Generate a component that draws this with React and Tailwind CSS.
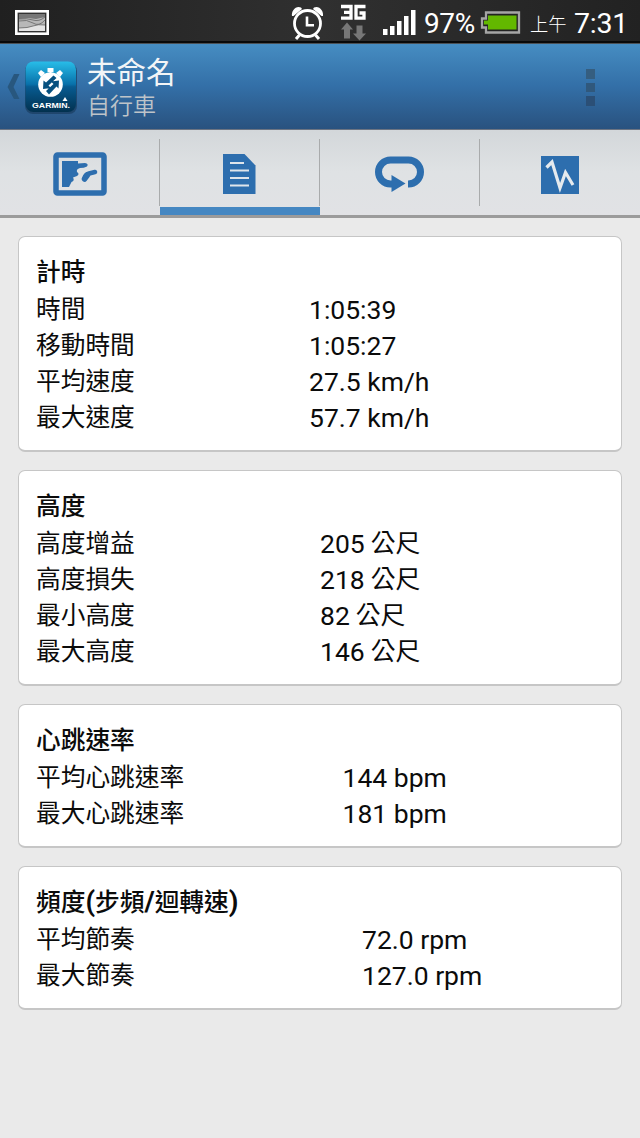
const cards = [
  { title: ["計時"], col: "w-[273px]", rows: [["時間", "1:05:39", ""], ["移動時間", "1:05:27", ""], ["平均速度", "27.5 km/h", ""], ["最大速度", "57.7 km/h", ""]] },
  { title: ["高度"], col: "w-[284px]", rows: [["高度增益", "205", "公尺"], ["高度損失", "218", "公尺"], ["最小高度", "82", "公尺"], ["最大高度", "146", "公尺"]] },
  { title: ["心跳速率"], col: "w-[306.5px]", rows: [["平均心跳速率", "144 bpm", ""], ["最大心跳速率", "181 bpm", ""]] },
  { title: ["頻度", "(", "步頻", "/", "迴轉速", ")"], col: "w-[326px]", rows: [["平均節奏", "72.0 rpm", ""], ["最大節奏", "127.0 rpm", ""]] },
];

function StatusBar() {
  return (
    <header className="flex h-11 shrink-0 items-center border-b border-[#4a5055] bg-gradient-to-r from-[#202020] via-[#303030] to-[#222222] text-white shadow-[inset_0_-2px_0_#090909]">
      <svg className="mt-[2px] ml-[15px] shrink-0" width="34" height="25" viewBox="0 0 34 25">
        <rect x="1.3" y="1.3" width="31.4" height="22.4" fill="#333" stroke="#fff" strokeWidth="2.6" />
        <rect x="4" y="4" width="26" height="17" fill="#b8b8b8" />
        <path d="M4 4h26v3l-9 2-8-1-9 1z" fill="#777" />
        <path d="M4 18q9 0 14-2t12-1v6H4z" fill="#e4e4e4" />
        <path d="M4 9q8-1 14 1t12-3M4 11q8-2 14 2t12-3M4 18q9 0 14-2t12-1" fill="none" stroke="#666" strokeWidth=".8" />
      </svg>
      <svg className="ml-[242px] shrink-0" width="34" height="36" viewBox="0 0 34 36" fill="none" stroke="#fff">
        <circle cx="16.5" cy="19.5" r="13" strokeWidth="2.8" />
        <path d="M16 12.5v8.7h7" strokeWidth="2.6" />
        <path d="M8.5 31l-3.5 4M24.5 31l3.5 4" strokeWidth="3" />
        <path d="M1 12C0 7 5 1 10 3.500l1 1.500-8.500 7zM32 12C33 7 28 1 23 3.500l-1 1.500 8.500 7z" fill="#fff" stroke="none" />
      </svg>
      <svg className="ml-[15px] shrink-0" width="28" height="38" viewBox="0 0 28 38">
        <path d="M1 3.500h10v11.700H1M4 9.300h7M25.500 3.500h-9.500v11.700h8V10h-4.500" fill="none" stroke="#fff" strokeWidth="3.3" />
        <path d="M7 19.500l6 7h-3v9H4v-9H1zM19.500 37.500l-6.500-7h3.500v-8h6v8h3.500z" fill="#777" />
      </svg>
      <svg className="ml-[14px] shrink-0" width="34" height="28" viewBox="0 0 34 28" fill="#fff">
        <path d="M1 21h4.500v6H1zM8 18h4.500v9H8zM15 13h4.500v14H15zM22 8h4.500v19H22zM29 2h4.500v25H29z" />
      </svg>
      <span className="ml-[8px] w-[53px] whitespace-nowrap pt-[3px] text-[28px] leading-[41px] tracking-[-0.4px]">97%</span>
      <svg className="mt-[2px] ml-[3px] shrink-0" width="41" height="24" viewBox="0 0 41 24">
        <path d="M6 1.500h33v20H6v-5H2v-9h4z" fill="#222" stroke="#a5a5a5" strokeWidth="2.300" />
        <path d="M8 4.500h28.500v14H8v-5H4v-4h4z" fill="#63b800" />
      </svg>
      <span className="ml-[9px] w-[36px] whitespace-nowrap pt-[6px] text-[18.3px] font-light">上午</span>
      <span className="ml-[8px] whitespace-nowrap pt-[3px] text-[28.5px] leading-[41px] tracking-[-0.2px]">7:31</span>
    </header>
  );
}

function AppLogo() {
  return (
    <svg className="ml-[4px] shrink-0" width="52" height="54" viewBox="0 0 52 54">
      <defs>
        <linearGradient id="logo" x2="0" y2="1">
          <stop stopColor="#28bde8" /><stop offset=".45" stopColor="#0871aa" />
          <stop offset=".5" stopColor="#075b91" /><stop offset="1" stopColor="#02314f" />
        </linearGradient>
      </defs>
      <rect y="2" width="52" height="51" rx="8" fill="#193d60" opacity=".7" />
      <rect x=".5" y=".5" width="50.5" height="50.5" rx="8" fill="url(#logo)" />
      <circle cx="25.500" cy="23.500" r="12.300" fill="#fff" />
      <path d="M22.500 7h6v4h-2v2h-2v-2h-2zM13 12l3-3 4 3-4 4zM31 12l4-3 3 3-3 4z" fill="#fff" />
      <path d="M28.500 14.500L21 21.500l-2.500-2L18 28l8-1-2.500-2.500 8-7.500zM34 19.500l-8 1 2.500 2.500-7.500 7 3 3.500 7.500-8 2 2z" fill="#06507f" />
      <path d="M40 36l2.500 4h-5z" fill="#fff" />
      <text x="7" y="46.500" textLength="38" lengthAdjust="spacingAndGlyphs" fill="#fff" fontFamily="Liberation Sans, sans-serif" fontSize="7.500" fontWeight="bold">GARMIN.</text>
    </svg>
  );
}

function ActionBar() {
  return (
    <div className="flex h-[86px] shrink-0 items-start border-b border-[#6c7482] bg-gradient-to-b from-[#468dc2] via-[#336fa7] to-[#29527f]">
      <svg className="mt-[30px] ml-[7px] shrink-0" width="14" height="27" viewBox="0 0 14 27">
        <path d="M7 0h5.500L6.500 13l6 12H7L.5 13z" fill="#28577e" />
      </svg>
      <div className="mt-[17px]"><AppLogo /></div>
      <div className="ml-[10px] mt-[12px] flex flex-col">
        <h1 className="h-[34px] whitespace-nowrap text-[29.500px] leading-[34px] font-normal text-[#f2f5f7]">未命名</h1>
        <p className="h-[30px] whitespace-nowrap text-[23px] leading-[33px] font-[350] text-[#bec4c9]">自行車</p>
      </div>
      <div className="ml-auto mr-[45px] mt-[25px] flex flex-col gap-[4px]">
        <span className="size-[9.5px] bg-[#355e80]" /><span className="size-[9.5px] bg-[#30587c]" /><span className="size-[9.5px] bg-[#2b4f76]" />
      </div>
    </div>
  );
}

function MapIcon() {
  return (
    <svg width="54" height="44" viewBox="0 0 54 44">
      <rect x="3" y="3" width="48" height="38" rx="1.500" fill="none" stroke="#2d6eae" strokeWidth="5.500" />
      <path d="M9 9h16v2.500l7-.5q4 .5 2 3.500-3 1.500-7 1.500-4 1-3 4 3 2 0 4l-4 1.500q2 3-1.500 4.500L16 35H9z" fill="#2d6eae" />
      <path d="M31.500 26.500q.5-4 4.500-5l6-1.500" fill="none" stroke="#2d6eae" strokeWidth="4.600" strokeLinecap="round" />
      <path d="M31.500 27l3-4" stroke="#2d6eae" strokeWidth="5.500" strokeLinecap="round" />
    </svg>
  );
}

function Tabs() {
  const icons = [
    <MapIcon key="map" />,
    <svg key="doc" width="33" height="40" viewBox="0 0 33 40">
      <path d="M0 0h21.500L32.500 11.500V40H0z" fill="#2d6eae" />
      <path d="M7 9h14M7 16.500h19M7 24h19M7 31.500h19" stroke="#dfe5eb" strokeWidth="2.200" />
    </svg>,
    <svg key="loop" width="49" height="36" viewBox="0 0 49 36">
      <path d="M17 28h-1.500a12 12 0 0 1 0-24H33.500a12 12 0 0 1 0 24H33" fill="none" stroke="#2d6eae" strokeWidth="7" />
      <path d="M16.500 19l14 8.500-14 8.500z" fill="#2d6eae" />
    </svg>,
    <svg key="chart" width="38" height="38" viewBox="0 0 38 38">
      <path d="M0 0h38v38H0z" fill="#2d6eae" />
      <path d="M5.500 11.500L11 6l8 26 5.500-15.500 7.500 12.500" fill="none" stroke="#e5eaee" strokeWidth="3.200" />
    </svg>,
  ];
  const pads = ["pt-[22px]", "pt-[24px]", "pt-[26px]", "pt-[26px]"];
  return (
    <nav className="grid h-[88px] shrink-0 grid-cols-4 border-b-[3px] border-[#9b9b9b] bg-gradient-to-b from-[#d3d7da] via-[#dfe2e4] to-[#e1e2e5]">
      {icons.map((icon, i) => (
        <div key={i} className="flex flex-col">
          <div className="flex h-[77px] pt-[9px]">
            <div className={"-mt-[9px] flex flex-1 items-start justify-center " + pads[i]}>{icon}</div>
            {i < 3 && <div className="h-[67px] w-px bg-[#a9abac]" />}
          </div>
          {i === 1 && <div className="h-2 bg-[#4587c2]" />}
        </div>
      ))}
    </nav>
  );
}

function Card({ title, col, rows }) {
  return (
    <section className="rounded-[7px] border border-b-2 border-[#c6c6c6] bg-white pt-[18px] pb-[15px] pl-[17px] text-[26.500px] leading-9 text-[#0b0b0b]">
      <h2 className="h-9 whitespace-nowrap text-[24.7px] font-[550] leading-9">
        {title.map((part, i) => (
          <span key={i} className={i % 2 ? "text-[27.5px] leading-none font-bold" : ""}>{part}</span>
        ))}
      </h2>
      {rows.map(([label, value, unit]) => (
        <div key={label} className="flex h-9 whitespace-nowrap">
          <span className={"shrink-0 pt-px text-[24.7px] " + col}>{label}</span>
          <span className="pt-px">{value}</span>
          {unit && <span className="ml-[6px] pt-px text-[24.7px]">{unit}</span>}
        </div>
      ))}
    </section>
  );
}

export default function App() {
  return (
    <div className="flex h-[1138px] w-[640px] flex-col overflow-hidden bg-[#eaeaea] font-[Roboto,'Noto_Sans_CJK_TC',sans-serif]">
      <StatusBar />
      <ActionBar />
      <Tabs />
      <main className="flex flex-col gap-[18px] px-[18px] pt-[18px]">
        {cards.map((card) => <Card key={card.col} {...card} />)}
      </main>
    </div>
  );
}
